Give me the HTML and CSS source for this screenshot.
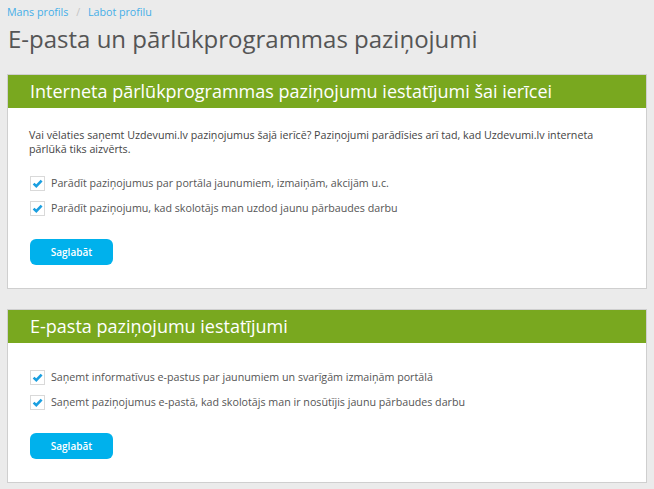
FILE: index.html
```html
<!DOCTYPE html>
<html lang="lv">
<head>
    <meta charset="UTF-8">
    <meta name="viewport" content="width=device-width, initial-scale=1.0">
    <title>E-pasta un pārlūkprogrammas paziņojumi</title>
    <link rel="stylesheet" href="styles.css">
</head>
<body>
    <!-- Breadcrumb -->
    <div class="breadcrumb">
        <a href="#">Mans profils</a>
        <span class="sep">/</span>
        <a href="#">Labot profilu</a>
    </div>

    <h1>E-pasta un pārlūkprogrammas paziņojumi</h1>

    <!-- Browser notifications -->
    <div class="panel">
        <div class="panel-heading">Interneta pārlūkprogrammas paziņojumu iestatījumi šai ierīcei</div>
        <div class="panel-body">
            <p class="intro">Vai vēlaties saņemt Uzdevumi.lv paziņojumus šajā ierīcē? Paziņojumi parādīsies arī tad, kad Uzdevumi.lv interneta pārlūkā tiks aizvērts.</p>
            <div class="options">
                <label class="option">
                    <span class="check"><svg viewBox="0 0 13 13"><path d="M2.6 6.6 L5.3 9.2 L10.6 3.6" fill="none" stroke="#1a9fe0" stroke-width="2.6"/></svg></span>
                    Parādīt paziņojumus par portāla jaunumiem, izmaiņām, akcijām u.c.
                </label>
                <label class="option">
                    <span class="check"><svg viewBox="0 0 13 13"><path d="M2.6 6.6 L5.3 9.2 L10.6 3.6" fill="none" stroke="#1a9fe0" stroke-width="2.6"/></svg></span>
                    Parādīt paziņojumu, kad skolotājs man uzdod jaunu pārbaudes darbu
                </label>
            </div>
            <button class="btn-save">Saglabāt</button>
        </div>
    </div>

    <!-- Email notifications -->
    <div class="panel">
        <div class="panel-heading">E-pasta paziņojumu iestatījumi</div>
        <div class="panel-body">
            <div class="options options-top">
                <label class="option">
                    <span class="check"><svg viewBox="0 0 13 13"><path d="M2.6 6.6 L5.3 9.2 L10.6 3.6" fill="none" stroke="#1a9fe0" stroke-width="2.6"/></svg></span>
                    Saņemt informatīvus e-pastus par jaunumiem un svarīgām izmaiņām portālā
                </label>
                <label class="option">
                    <span class="check"><svg viewBox="0 0 13 13"><path d="M2.6 6.6 L5.3 9.2 L10.6 3.6" fill="none" stroke="#1a9fe0" stroke-width="2.6"/></svg></span>
                    Saņemt paziņojumus e-pastā, kad skolotājs man ir nosūtījis jaunu pārbaudes darbu
                </label>
            </div>
            <button class="btn-save">Saglabāt</button>
        </div>
    </div>
</body>
</html>
```

FILE: styles.css
```css
/* Page */
body {
    margin: 0;
    padding: 0 7px;
    background-color: #ebebeb;
    font-family: "Open Sans", "DejaVu Sans", sans-serif;
    color: #555;
}

.breadcrumb {
    padding-top: 5px;
    font-size: 10.7px;
    line-height: 15px;
}

.breadcrumb a {
    color: #45aee8;
    text-decoration: none;
}

.breadcrumb .sep {
    color: #c4c4c4;
    margin: 0 5px;
}

h1 {
    margin: 4px 0 20px 1px;
    font-size: 24px;
    font-weight: normal;
    line-height: 30px;
    color: #555;
}

/* Panels */
.panel {
    background-color: #fff;
    border: 1px solid #cfcfcf;
    margin-bottom: 20px;
}

.panel-heading {
    background-color: #79a81f;
    color: #fff;
    font-size: 18px;
    line-height: 33px;
    padding: 0 22px;
}

.panel-body {
    padding: 20px 21px 23px;
}

.intro {
    margin: 0 0 20px;
    font-size: 10.7px;
    line-height: 14px;
    color: #444;
}

.options {
    display: flex;
    flex-direction: column;
    gap: 10px;
    margin-bottom: 23px;
}

.options-top {
    padding-top: 7px;
}

.option {
    display: flex;
    align-items: center;
    gap: 6px;
    margin-left: 1px;
    font-size: 10.7px;
    line-height: 15px;
    color: #555;
}

.check {
    width: 13px;
    height: 13px;
    border: 1px solid #d9d9d9;
    background-color: #fff;
    display: flex;
}

.check svg {
    width: 13px;
    height: 13px;
}

.btn-save {
    display: block;
    width: 83px;
    height: 26px;
    margin-left: 1px;
    border: none;
    border-radius: 6px;
    background-color: #00b1ec;
    color: #fff;
    font-family: "Open Sans", "DejaVu Sans", sans-serif;
    font-size: 10px;
    font-weight: 600;
    cursor: pointer;
}
```
